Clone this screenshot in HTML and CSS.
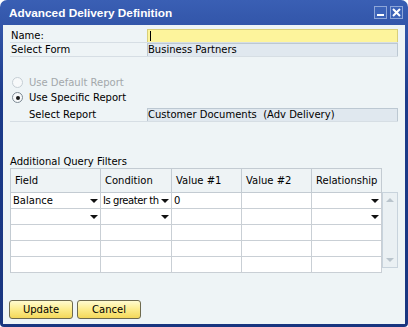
FILE: index.html
```html
<!DOCTYPE html>
<html lang="en">
<head>
    <meta charset="UTF-8">
    <title>Advanced Delivery Definition</title>
    <link rel="stylesheet" href="styles.css">
</head>
<body>
    <div class="window">
        <div class="titlebar">
            <span class="title">Advanced Delivery Definition</span>
            <div class="title-btns">
                <span class="tbtn tbtn-min"></span>
                <span class="tbtn tbtn-close">
                    <svg width="9" height="9" viewBox="0 0 9 9"><path d="M1 1 L8 8 M8 1 L1 8" stroke="#fff" stroke-width="2"/></svg>
                </span>
            </div>
        </div>

        <div class="content">
            <div class="form-row">
                <span class="label">Name:</span>
                <span class="field field-edit"><span class="caret"></span></span>
            </div>
            <div class="form-row">
                <span class="label">Select Form</span>
                <span class="field">Business Partners</span>
            </div>

            <div class="radios">
                <div class="radio-row disabled">
                    <span class="radio"></span>
                    <span>Use Default Report</span>
                </div>
                <div class="radio-row">
                    <span class="radio checked"></span>
                    <span>Use Specific Report</span>
                </div>
            </div>
            <div class="form-row indent">
                <span class="label">Select Report</span>
                <span class="field">Customer Documents&nbsp; (Adv Delivery)</span>
            </div>

            <div class="section-title">Additional Query Filters</div>

            <div class="grid-wrap">
                <div class="grid">
                    <div class="hcell">Field</div>
                    <div class="hcell">Condition</div>
                    <div class="hcell">Value #1</div>
                    <div class="hcell">Value #2</div>
                    <div class="hcell">Relationship</div>

                    <div class="cell"><span class="txt">Balance</span><span class="arrow"></span></div>
                    <div class="cell"><span class="txt tight">Is greater th</span><span class="arrow"></span></div>
                    <div class="cell"><span class="txt">0</span></div>
                    <div class="cell"></div>
                    <div class="cell"><span class="txt"></span><span class="arrow"></span></div>

                    <div class="cell"><span class="txt"></span><span class="arrow"></span></div>
                    <div class="cell"><span class="txt"></span><span class="arrow"></span></div>
                    <div class="cell"></div>
                    <div class="cell"></div>
                    <div class="cell"><span class="txt"></span><span class="arrow"></span></div>

                    <div class="cell"></div>
                    <div class="cell"></div>
                    <div class="cell"></div>
                    <div class="cell"></div>
                    <div class="cell"></div>

                    <div class="cell"></div>
                    <div class="cell"></div>
                    <div class="cell"></div>
                    <div class="cell"></div>
                    <div class="cell"></div>

                    <div class="cell"></div>
                    <div class="cell"></div>
                    <div class="cell"></div>
                    <div class="cell"></div>
                    <div class="cell"></div>
                </div>
                <div class="scrollbar">
                    <span class="sarrow up"></span>
                    <span class="sarrow down"></span>
                </div>
            </div>

            <div class="buttons">
                <button class="btn">Update</button>
                <button class="btn">Cancel</button>
            </div>
        </div>
    </div>
</body>
</html>
```

FILE: styles.css
```css
body {
    margin: 0;
    padding: 0;
    font-family: 'DejaVu Sans', sans-serif;
    font-size: 10px;
    color: #000;
    background: #fff;
}

.window {
    width: 408px;
    height: 327px;
    box-sizing: border-box;
    background: linear-gradient(#3a5fb4, #1c3b8a 30%, #18357f);
    border-radius: 7px 7px 4px 4px;
    padding: 0 3px 3px 3px;
    display: flex;
    flex-direction: column;
}

.titlebar {
    height: 25px;
    display: flex;
    align-items: center;
    justify-content: space-between;
    padding-left: 6px;
    color: #fff;
}

.title {
    font-family: 'Liberation Sans', sans-serif;
    font-weight: bold;
    font-size: 11.8px;
}

.title-btns {
    display: flex;
    gap: 3px;
    margin-right: 2px;
}

.tbtn {
    width: 13px;
    height: 13px;
    box-sizing: border-box;
    border: 1px solid #8ea6d8;
    background: #3c63b8;
    display: flex;
    align-items: center;
    justify-content: center;
    position: relative;
}

.tbtn-min::after {
    content: "";
    position: absolute;
    left: 2px;
    right: 2px;
    bottom: 2px;
    height: 2px;
    background: #fff;
}

.content {
    flex: 1;
    background: #eef4f6;
    padding: 4px 7px 0 6px;
    display: flex;
    flex-direction: column;
}

.form-row {
    display: flex;
    height: 14px;
    border-bottom: 1px solid #d6dee4;
    box-sizing: border-box;
    margin-left: 1px;
}

.form-row .label {
    width: 136px;
    padding-left: 1px;
    line-height: 13px;
}

.form-row.indent .label {
    padding-left: 19px;
    width: 118px;
}

.field {
    flex: 1;
    background: #e0e8ef;
    border: 1px solid #bcc8d2;
    border-bottom: none;
    line-height: 12px;
    padding-left: 0;
    white-space: nowrap;
}

.field-edit {
    background: #fdf49c;
    border-color: #d8cf7a;
}

.caret {
    display: inline-block;
    width: 1px;
    height: 10px;
    margin: 1px 0 0 2px;
    background: #000;
    vertical-align: top;
}

.radios {
    margin-top: 18px;
    display: flex;
    flex-direction: column;
}

.radio-row {
    display: flex;
    align-items: center;
    gap: 6px;
    height: 15px;
    padding-left: 3px;
}

.radio-row.disabled {
    color: #a3a8ab;
}

.radio {
    width: 11px;
    height: 11px;
    box-sizing: border-box;
    border-radius: 50%;
    border: 1px solid #7d8a94;
    background: #f7f9fa;
    display: flex;
    align-items: center;
    justify-content: center;
}

.disabled .radio {
    border-color: #c5ced4;
}

.radio.checked::after {
    content: "";
    width: 4px;
    height: 4px;
    border-radius: 50%;
    background: #1a1a1a;
}

.radios + .form-row {
    margin-top: 3px;
}

.section-title {
    margin-top: 34px;
    height: 12px;
    line-height: 12px;
    padding-left: 1px;
}

.grid-wrap {
    display: flex;
    align-items: flex-start;
    margin-left: 1px;
}

.grid {
    display: grid;
    grid-template-columns: 90px 71px 70px 70px 70px;
    grid-template-rows: 24px repeat(5, 16px);
    border-top: 1px solid #c3cbd2;
    border-left: 1px solid #c3cbd2;
}

.hcell {
    background: #eef3f5;
    border-right: 1px solid #c3cbd2;
    border-bottom: 1px solid #c3cbd2;
    padding-left: 4px;
    line-height: 23px;
}

.cell {
    background: #fff;
    border-right: 1px solid #c9cfd5;
    border-bottom: 1px solid #c9cfd5;
    padding: 0 2px 0 2px;
    line-height: 15px;
    display: flex;
    align-items: center;
    gap: 1px;
    min-width: 0;
}

.txt {
    flex: 1;
    min-width: 0;
    white-space: nowrap;
    overflow: hidden;
}

.txt.tight {
    letter-spacing: -0.45px;
}

.arrow {
    flex: none;
    width: 0;
    height: 0;
    border-left: 4px solid transparent;
    border-right: 4px solid transparent;
    border-top: 4px solid #111;
}

.scrollbar {
    margin-top: 24px;
    width: 18px;
    height: 76px;
    box-sizing: border-box;
    background: #eaf0f3;
    border: 1px solid #c8d3dc;
    display: flex;
    flex-direction: column;
    justify-content: space-between;
    align-items: center;
    padding: 5px 0;
}

.sarrow {
    width: 0;
    height: 0;
    border-left: 4px solid transparent;
    border-right: 4px solid transparent;
}

.sarrow.up {
    border-bottom: 4px solid #b9c4cc;
}

.sarrow.down {
    border-top: 4px solid #b9c4cc;
}

.buttons {
    margin-top: 27px;
    display: flex;
    gap: 4px;
}

.btn {
    width: 64px;
    height: 19px;
    box-sizing: border-box;
    font-family: 'DejaVu Sans', sans-serif;
    font-size: 10px;
    color: #000;
    background: linear-gradient(#fffbd0, #fcec8c 50%, #f4d85a);
    border: 1px solid #6e6a4e;
    border-radius: 3px;
    padding: 0;
    cursor: pointer;
}
```
